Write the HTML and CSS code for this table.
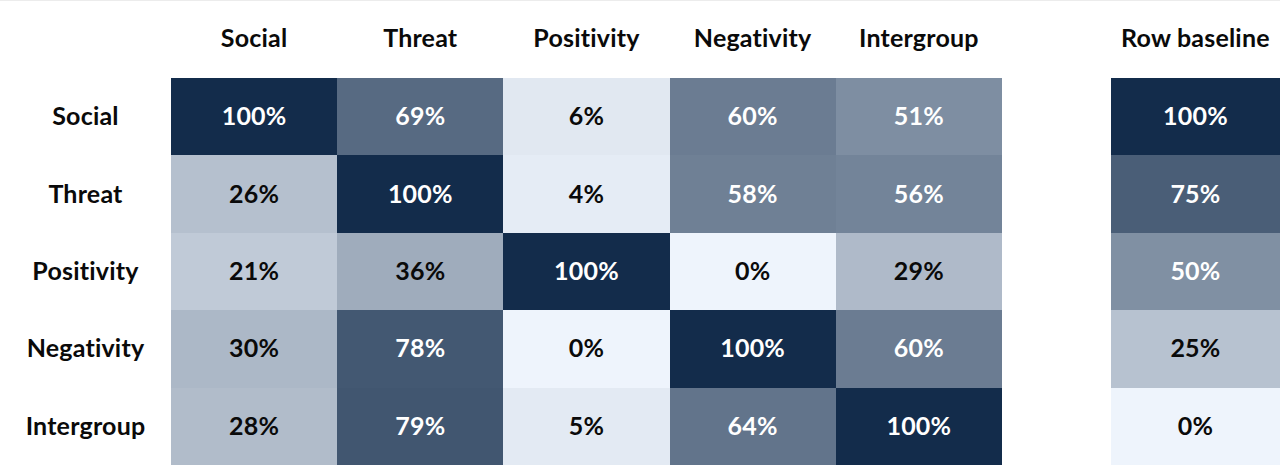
FILE: index.html
```html
<!DOCTYPE html>
<html lang="en">
<head>
<meta charset="utf-8">
<title>Row baseline heatmap</title>
<link rel="stylesheet" href="styles.css">
</head>
<body>
<div class="chart">
  <div class="corner"></div>
  <div class="colhead">Social</div>
  <div class="colhead">Threat</div>
  <div class="colhead">Positivity</div>
  <div class="colhead">Negativity</div>
  <div class="colhead">Intergroup</div>
  <div class="colhead base">Row baseline</div>

  <div class="rowhead">Social</div>
  <div class="cell dark" style="background:rgb(19,44,75)">100%</div>
  <div class="cell dark" style="background:rgb(87,106,130)">69%</div>
  <div class="cell" style="background:rgb(225,232,241)">6%</div>
  <div class="cell dark" style="background:rgb(107,124,146)">60%</div>
  <div class="cell dark" style="background:rgb(126,142,162)">51%</div>
  <div class="cell dark base" style="background:rgb(19,44,75)">100%</div>

  <div class="rowhead">Threat</div>
  <div class="cell" style="background:rgb(181,192,206)">26%</div>
  <div class="cell dark" style="background:rgb(19,44,75)">100%</div>
  <div class="cell" style="background:rgb(229,236,245)">4%</div>
  <div class="cell dark" style="background:rgb(111,128,149)">58%</div>
  <div class="cell dark" style="background:rgb(115,132,153)">56%</div>
  <div class="cell dark base" style="background:rgb(74,94,119)">75%</div>

  <div class="rowhead">Positivity</div>
  <div class="cell" style="background:rgb(192,202,215)">21%</div>
  <div class="cell" style="background:rgb(159,172,188)">36%</div>
  <div class="cell dark" style="background:rgb(19,44,75)">100%</div>
  <div class="cell" style="background:rgb(238,244,252)">0%</div>
  <div class="cell" style="background:rgb(175,186,201)">29%</div>
  <div class="cell dark base" style="background:rgb(128,144,163)">50%</div>

  <div class="rowhead">Negativity</div>
  <div class="cell" style="background:rgb(172,184,199)">30%</div>
  <div class="cell dark" style="background:rgb(67,88,114)">78%</div>
  <div class="cell" style="background:rgb(238,244,252)">0%</div>
  <div class="cell dark" style="background:rgb(19,44,75)">100%</div>
  <div class="cell dark" style="background:rgb(107,124,146)">60%</div>
  <div class="cell base" style="background:rgb(183,194,208)">25%</div>

  <div class="rowhead">Intergroup</div>
  <div class="cell" style="background:rgb(177,188,202)">28%</div>
  <div class="cell dark" style="background:rgb(65,86,112)">79%</div>
  <div class="cell" style="background:rgb(227,234,243)">5%</div>
  <div class="cell dark" style="background:rgb(98,116,139)">64%</div>
  <div class="cell dark" style="background:rgb(19,44,75)">100%</div>
  <div class="cell base" style="background:rgb(238,244,252)">0%</div>
</div>
</body>
</html>
```
FILE: styles.css
```css
html, body {
  margin: 0;
  padding: 0;
  background: #ffffff;
}

body {
  font-family: "Lato", "Liberation Sans", sans-serif;
  font-weight: 700;
  color: #0a0a0a;
  border-top: 1px solid #ececec;
  height: 466px;
  overflow: hidden;
}

.chart {
  display: grid;
  grid-template-columns: 171px repeat(5, 166.2px) 109px 169px;
  grid-template-rows: 77px repeat(5, 77.4px);
}

.corner,
.colhead,
.rowhead,
.cell {
  display: flex;
  align-items: center;
  justify-content: center;
  font-size: 25px;
  letter-spacing: 0.2px;
  white-space: nowrap;
  padding-bottom: 3px;
  box-sizing: border-box;
}

.colhead {
  padding-bottom: 5px;
}

.cell {
  color: #0a0a0a;
}

.cell.dark {
  color: #ffffff;
}

.base {
  grid-column: 8;
}
```
